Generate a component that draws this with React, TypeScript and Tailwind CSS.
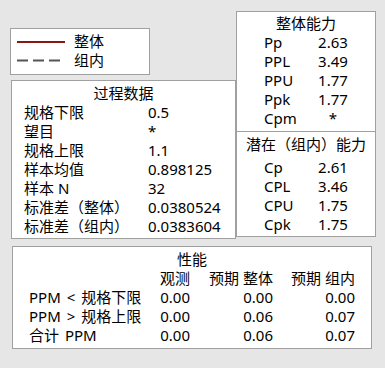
import React from "react";

const box = "border border-[#a0a0a0] bg-white";

function Rows({ rows, labelW, valueCls }: { rows: [string, string][]; labelW: string; valueCls?: string }) {
  return (
    <div className={`grid ${labelW}`}>
      {rows.map(([l, v]) => (
        <React.Fragment key={l}>
          <div className="whitespace-nowrap">{l}</div>
          <div className={`whitespace-nowrap ${valueCls ?? ""}`}>{v}</div>
        </React.Fragment>
      ))}
    </div>
  );
}

export default function App() {
  return (
    <div
      className="w-[385px] h-[368px] bg-[#e6e6e6] overflow-hidden text-[15px] leading-[19px] text-black"
      style={{ fontFamily: '"Noto Sans", "Noto Sans CJK SC", sans-serif' }}
    >
      <div className="flex pt-[11px]">
        <div className="flex flex-col ml-[10px] w-[226px]">
          {/* legend */}
          <div className={`${box} mt-[17px] w-[140px] h-[47px] pt-[3px]`}>
            <div className="flex items-center h-[19px]">
              <div className="ml-[6px] w-[48px] h-[2px] bg-[#8b1414]" />
              <div className="ml-[9px]">整体</div>
            </div>
            <div className="flex items-center h-[19px]">
              <svg className="ml-[6px]" width="48" height="3" viewBox="0 0 48 3">
                <line x1="0" y1="1.5" x2="43" y2="1.5" stroke="#555555" strokeWidth="2" strokeDasharray="11 5" />
              </svg>
              <div className="ml-[9px]">组内</div>
            </div>
          </div>
          {/* process data */}
          <div className={`${box} mt-[5px] ml-[1px] w-[225px] h-[159px] pt-[3px]`}>
            <div className="text-center">过程数据</div>
            <div className="pl-[12px]">
              <Rows
                labelW="grid-cols-[124px_1fr]"
                rows={[
                  ["规格下限", "0.5"],
                  ["望目", "*"],
                  ["规格上限", "1.1"],
                  ["样本均值", "0.898125"],
                  ["样本 N", "32"],
                  ["标准差（整体）", "0.0380524"],
                  ["标准差（组内）", "0.0383604"],
                ]}
              />
            </div>
          </div>
        </div>
        {/* capability */}
        <div className={`${box} w-[140px] h-[226px] flex flex-col`}>
          <div className="h-[119px] pt-[2px]">
            <div className="text-center">整体能力</div>
            <div className="pl-[27px]">
              <Rows
                labelW="grid-cols-[53px_32px]"
                valueCls="text-center"
                rows={[
                  ["Pp", "2.63"],
                  ["PPL", "3.49"],
                  ["PPU", "1.77"],
                  ["Ppk", "1.77"],
                  ["Cpm", "*"],
                ]}
              />
            </div>
          </div>
          <div className="flex-1 border-t border-[#a0a0a0] pt-[3px]">
            <div className="text-center">潜在（组内）能力</div>
            <div className="pl-[27px] mt-[4px]">
              <Rows
                labelW="grid-cols-[53px_32px]"
                valueCls="text-center"
                rows={[
                  ["Cp", "2.61"],
                  ["CPL", "3.46"],
                  ["CPU", "1.75"],
                  ["Cpk", "1.75"],
                ]}
              />
            </div>
          </div>
        </div>
      </div>
      {/* performance */}
      <div className={`${box} mt-[7px] ml-[12px] w-[360px] h-[103px] pt-[3px]`}>
        <div className="text-center">性能</div>
        <div className="pl-[16px] grid grid-cols-[121px_40px_83px_82px] whitespace-nowrap">
          <div />
          <div className="text-right">观测</div>
          <div className="text-right">预期 整体</div>
          <div className="text-right">预期 组内</div>
          {[
            ["PPM < 规格下限", "0.00", "0.00", "0.00"],
            ["PPM > 规格上限", "0.00", "0.06", "0.07"],
            ["合计 PPM", "0.00", "0.06", "0.07"],
          ].map((r) => (
            <React.Fragment key={r[0]}>
              <div className="[word-spacing:2px]">{r[0]}</div>
              <div className="text-right">{r[1]}</div>
              <div className="text-right">{r[2]}</div>
              <div className="text-right">{r[3]}</div>
            </React.Fragment>
          ))}
        </div>
      </div>
    </div>
  );
}
